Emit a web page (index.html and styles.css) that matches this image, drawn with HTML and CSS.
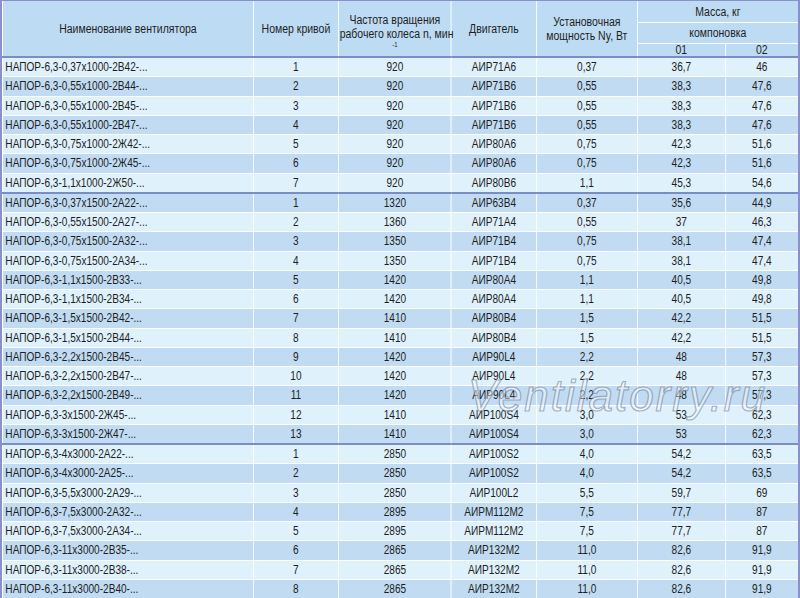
FILE: index.html
```html
<!DOCTYPE html>
<html lang="ru">
<head>
<meta charset="utf-8">
<title>НАПОР-6,3</title>
<link rel="stylesheet" href="styles.css">
</head>
<body>
<div class="wrap">
<table class="tbl">
<colgroup>
<col class="c1"><col class="c2"><col class="c3"><col class="c4"><col class="c5"><col class="c6"><col class="c7">
</colgroup>
<thead>
<tr class="h1">
<th rowspan="3">Наименование вентилятора</th>
<th rowspan="3">Номер кривой</th>
<th rowspan="3" class="freq">Частота вращения<br>рабочего колеса n, мин<br><span class="sup">-1</span></th>
<th rowspan="3">Двигатель</th>
<th rowspan="3">Установочная<br>мощность Ny, Вт</th>
<th colspan="2">Масса, кг</th>
</tr>
<tr class="h2"><th colspan="2">компоновка</th></tr>
<tr class="h3"><th>01</th><th>02</th></tr>
</thead>
<tbody>
<tr class="l"><td class="n">НАПОР-6,3-0,37х1000-2В42-...</td><td>1</td><td>920</td><td>АИР71А6</td><td>0,37</td><td>36,7</td><td>46</td></tr>
<tr class="d"><td class="n">НАПОР-6,3-0,55х1000-2В44-...</td><td>2</td><td>920</td><td>АИР71В6</td><td>0,55</td><td>38,3</td><td>47,6</td></tr>
<tr class="l"><td class="n">НАПОР-6,3-0,55х1000-2В45-...</td><td>3</td><td>920</td><td>АИР71В6</td><td>0,55</td><td>38,3</td><td>47,6</td></tr>
<tr class="d"><td class="n">НАПОР-6,3-0,55х1000-2В47-...</td><td>4</td><td>920</td><td>АИР71В6</td><td>0,55</td><td>38,3</td><td>47,6</td></tr>
<tr class="l"><td class="n">НАПОР-6,3-0,75х1000-2Ж42-...</td><td>5</td><td>920</td><td>АИР80А6</td><td>0,75</td><td>42,3</td><td>51,6</td></tr>
<tr class="d"><td class="n">НАПОР-6,3-0,75х1000-2Ж45-...</td><td>6</td><td>920</td><td>АИР80А6</td><td>0,75</td><td>42,3</td><td>51,6</td></tr>
<tr class="l"><td class="n">НАПОР-6,3-1,1х1000-2Ж50-...</td><td>7</td><td>920</td><td>АИР80В6</td><td>1,1</td><td>45,3</td><td>54,6</td></tr>
<tr class="d g"><td class="n">НАПОР-6,3-0,37х1500-2А22-...</td><td>1</td><td>1320</td><td>АИР63В4</td><td>0,37</td><td>35,6</td><td>44,9</td></tr>
<tr class="l"><td class="n">НАПОР-6,3-0,55х1500-2А27-...</td><td>2</td><td>1360</td><td>АИР71А4</td><td>0,55</td><td>37</td><td>46,3</td></tr>
<tr class="d"><td class="n">НАПОР-6,3-0,75х1500-2А32-...</td><td>3</td><td>1350</td><td>АИР71В4</td><td>0,75</td><td>38,1</td><td>47,4</td></tr>
<tr class="l"><td class="n">НАПОР-6,3-0,75х1500-2А34-...</td><td>4</td><td>1350</td><td>АИР71В4</td><td>0,75</td><td>38,1</td><td>47,4</td></tr>
<tr class="d"><td class="n">НАПОР-6,3-1,1х1500-2В33-...</td><td>5</td><td>1420</td><td>АИР80А4</td><td>1,1</td><td>40,5</td><td>49,8</td></tr>
<tr class="l"><td class="n">НАПОР-6,3-1,1х1500-2В34-...</td><td>6</td><td>1420</td><td>АИР80А4</td><td>1,1</td><td>40,5</td><td>49,8</td></tr>
<tr class="d"><td class="n">НАПОР-6,3-1,5х1500-2В42-...</td><td>7</td><td>1410</td><td>АИР80В4</td><td>1,5</td><td>42,2</td><td>51,5</td></tr>
<tr class="l"><td class="n">НАПОР-6,3-1,5х1500-2В44-...</td><td>8</td><td>1410</td><td>АИР80В4</td><td>1,5</td><td>42,2</td><td>51,5</td></tr>
<tr class="d"><td class="n">НАПОР-6,3-2,2х1500-2В45-...</td><td>9</td><td>1420</td><td>АИР90L4</td><td>2,2</td><td>48</td><td>57,3</td></tr>
<tr class="l"><td class="n">НАПОР-6,3-2,2х1500-2В47-...</td><td>10</td><td>1420</td><td>АИР90L4</td><td>2,2</td><td>48</td><td>57,3</td></tr>
<tr class="d"><td class="n">НАПОР-6,3-2,2х1500-2В49-...</td><td>11</td><td>1420</td><td>АИР90L4</td><td>2,2</td><td>48</td><td>57,3</td></tr>
<tr class="l"><td class="n">НАПОР-6,3-3х1500-2Ж45-...</td><td>12</td><td>1410</td><td>АИР100S4</td><td>3,0</td><td>53</td><td>62,3</td></tr>
<tr class="d"><td class="n">НАПОР-6,3-3х1500-2Ж47-...</td><td>13</td><td>1410</td><td>АИР100S4</td><td>3,0</td><td>53</td><td>62,3</td></tr>
<tr class="l g"><td class="n">НАПОР-6,3-4х3000-2А22-...</td><td>1</td><td>2850</td><td>АИР100S2</td><td>4,0</td><td>54,2</td><td>63,5</td></tr>
<tr class="d"><td class="n">НАПОР-6,3-4х3000-2А25-...</td><td>2</td><td>2850</td><td>АИР100S2</td><td>4,0</td><td>54,2</td><td>63,5</td></tr>
<tr class="l"><td class="n">НАПОР-6,3-5,5х3000-2А29-...</td><td>3</td><td>2850</td><td>АИР100L2</td><td>5,5</td><td>59,7</td><td>69</td></tr>
<tr class="d"><td class="n">НАПОР-6,3-7,5х3000-2А32-...</td><td>4</td><td>2895</td><td>АИРМ112М2</td><td>7,5</td><td>77,7</td><td>87</td></tr>
<tr class="l"><td class="n">НАПОР-6,3-7,5х3000-2А34-...</td><td>5</td><td>2895</td><td>АИРМ112М2</td><td>7,5</td><td>77,7</td><td>87</td></tr>
<tr class="d"><td class="n">НАПОР-6,3-11х3000-2В35-...</td><td>6</td><td>2865</td><td>АИР132М2</td><td>11,0</td><td>82,6</td><td>91,9</td></tr>
<tr class="l"><td class="n">НАПОР-6,3-11х3000-2В38-...</td><td>7</td><td>2865</td><td>АИР132М2</td><td>11,0</td><td>82,6</td><td>91,9</td></tr>
<tr class="d last"><td class="n">НАПОР-6,3-11х3000-2В40-...</td><td>8</td><td>2865</td><td>АИР132М2</td><td>11,0</td><td>82,6</td><td>91,9</td></tr>
</tbody>
</table>
<div class="watermark">Ventilatorry.ru</div>
</div>
</body>
</html>
```
FILE: styles.css
```css
html, body {
  margin: 0;
  padding: 0;
  background: #ffffff;
}
.wrap {
  position: relative;
  width: 800px;
  height: 598px;
  overflow: hidden;
  box-sizing: border-box;
  border-left: 2px solid #8a8fd0;
  border-right: 2px solid #8a8fd0;
  border-top: 1px solid #8a8fd0;
  background: #ffffff;
}
/* condensed type: the table is laid out wider and squeezed horizontally */
.tbl {
  border-collapse: collapse;
  table-layout: fixed;
  width: 947.6px;
  transform: scaleX(0.84);
  transform-origin: 0 0;
  font-family: "Liberation Sans", Arial, sans-serif;
  font-size: 12px;
  color: #1e1e1e;
}
.c1 { width: 298.8px; }
.c2 { width: 101.2px; }
.c3 { width: 134.5px; }
.c4 { width: 101.2px; }
.c5 { width: 120.2px; }
.c6 { width: 104.8px; }
.c7 { width: 86.9px; }
.tbl th {
  background: #bddbf3;
  font-weight: normal;
  font-size: 12.5px;
  border: 1px solid #ffffff;
  border-top: none;
  padding: 0 1px;
  line-height: 14px;
  text-align: center;
  vertical-align: middle;
  white-space: nowrap;
}
.tbl tr.h1 th { height: 21px; }
.tbl tr.h2 th { height: 20px; }
.tbl tr.h3 th { height: 12px; line-height: 12px; }
.tbl thead tr.h3 th,
.tbl thead tr.h1 th[rowspan] {
  border-bottom: 2px solid #7c8cc7;
}
.tbl th.freq { line-height: 14px; padding-top: 4px; }
.sup {
  display: block;
  font-size: 7px;
  line-height: 8px;
}
.tbl td {
  height: 18.25px;
  padding: 0 3px;
  border: 1px solid #ffffff;
  text-align: center;
  vertical-align: middle;
  line-height: 14px;
  white-space: nowrap;
}
.tbl td.n { text-align: left; padding-left: 3px; }
.tbl tr.l td { background: #dff1fb; }
.tbl tr.d td { background: #c1dcf2; }
.tbl tr.g td { border-top: 2px solid #7c8cc7; }
.tbl tr.last td { border-bottom: 2px solid #7c8cc7; }
.tbl tbody tr:first-child td { border-top: none; }
.watermark {
  position: absolute;
  left: 466px;
  top: 370px;
  font-family: "Liberation Sans", Arial, sans-serif;
  font-style: italic;
  font-size: 44px;
  letter-spacing: 2px;
  color: rgba(255, 255, 255, 0.45);
  -webkit-text-stroke: 1.2px rgba(110, 125, 150, 0.6);
  pointer-events: none;
  white-space: nowrap;
}
```
